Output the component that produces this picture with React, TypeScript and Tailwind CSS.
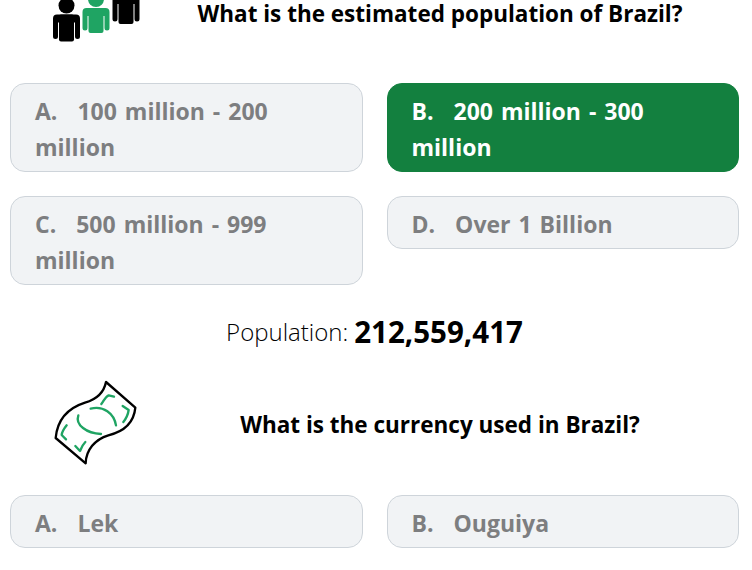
import React from "react";

type Option = { letter: string; text: string; picked?: boolean };

const populationOptions: Option[] = [
  { letter: "A.", text: "100 million - 200 million" },
  { letter: "B.", text: "200 million - 300 million", picked: true },
  { letter: "C.", text: "500 million - 999 million" },
  { letter: "D.", text: "Over 1 Billion" },
];

const currencyOptions: Option[] = [
  { letter: "A.", text: "Lek" },
  { letter: "B.", text: "Ouguiya" },
];

// One figure: head, body, and two white slits that split off the arms
function Person({ x, y, h, fill }: { x: number; y: number; h: number; fill: string }) {
  return (
    <g>
      <circle cx={x + 13.500} cy={y - 9} r="8" fill={fill} />
      <rect x={x + 6} y={y} width="15" height={h} rx="2" fill={fill} />
      <path
        d={`M${x} ${y + 4}a4 4 0 0 1 4-4h19a4 4 0 0 1 4 4v${h - 9}a2.500 2.500 0 0 1-5 0V${y + 8}h-17v${h - 13}a2.500 2.500 0 0 1-5 0z`}
        fill={fill}
      />
    </g>
  );
}

// People drawing, coordinates are the page's own
function PeopleIcon() {
  return (
    <svg width="90" height="100" viewBox="52 -37 90 100" className="block">
      <Person x={112.500} y={-4} h={28} fill="#000000" />
      <Person x={82.500} y={8} h={25} fill="#1fa463" />
      <Person x={53} y={14.500} h={27} fill="#000000" />
    </svg>
  );
}

// Banknote drawing
function MoneyIcon() {
  return (
    <svg width="110" height="100" viewBox="0 12 330 300" className="block" fill="none" strokeLinecap="round" strokeLinejoin="round">
      <path
        d="M198 36C192 66 170 88 135 98C85 114 52 150 47 204L137 280C138 240 165 208 205 196C255 184 282 155 286 113Z"
        stroke="#000000"
        strokeWidth="7"
      />
      <g stroke="#1fa463" strokeWidth="7">
        <path d="M115 136C105 165 140 190 183 192" />
        <path d="M152 116C190 106 222 130 228 166" />
        <path d="M184 102C192 92 196 80 206 76L222 80" />
        <path d="M248 108L266 120C264 134 258 146 250 156" />
        <path d="M80 166C72 176 66 186 65 195L78 208" />
        <path d="M106 228L120 243C124 232 128 224 136 216" />
      </g>
    </svg>
  );
}

function OptionButton({ option }: { option: Option }) {
  return (
    <div
      className={`rounded-[15px] border px-6 pt-[9px] pb-[6px] text-[23px] leading-9 font-bold [word-spacing:2px] ${
        option.picked
          ? "border-[#13803f] bg-[#13803f] text-white"
          : "border-[#ced4da] bg-[#f1f3f5] text-[#7d7e80]"
      }`}
    >
      <span className="mr-[20px]">{option.letter}</span>
      {option.text}
    </div>
  );
}

function Question({ icon, text }: { icon: React.ReactNode; text: string }) {
  return (
    <div className="flex h-[100px] items-center">
      <div className="w-[131px] shrink-0">{icon}</div>
      <div className="flex-1 pt-[2px] text-center text-[22.500px] font-bold text-black">{text}</div>
    </div>
  );
}

export default function App() {
  return (
    <div
      className="h-[570px] w-[752px] overflow-hidden bg-white"
      style={{ fontFamily: '"Open Sans", "Noto Sans", sans-serif' }}
    >
      <div className="-mt-[37px] pr-[13px] pl-[10px]">
        <Question icon={<div className="pl-[42px]"><PeopleIcon /></div>} text="What is the estimated population of Brazil?" />

        <div className="mt-5 grid grid-cols-2 items-start gap-x-6 gap-y-6">
          {populationOptions.map((option) => (
            <OptionButton key={option.letter} option={option} />
          ))}
        </div>

        <div className="mt-[27px] flex h-10 items-center justify-center gap-[6px] text-[24px] text-black">
          <span className="font-light">Population:</span>
          <span className="text-[29.500px] font-bold">212,559,417</span>
        </div>

        <div className="mt-[22px]">
          <Question icon={<div className="pl-[30px]"><MoneyIcon /></div>} text="What is the currency used in Brazil?" />
        </div>

        <div className="mt-[21px] grid grid-cols-2 items-start gap-x-6 gap-y-6">
          {currencyOptions.map((option) => (
            <OptionButton key={option.letter} option={option} />
          ))}
        </div>
      </div>
    </div>
  );
}
